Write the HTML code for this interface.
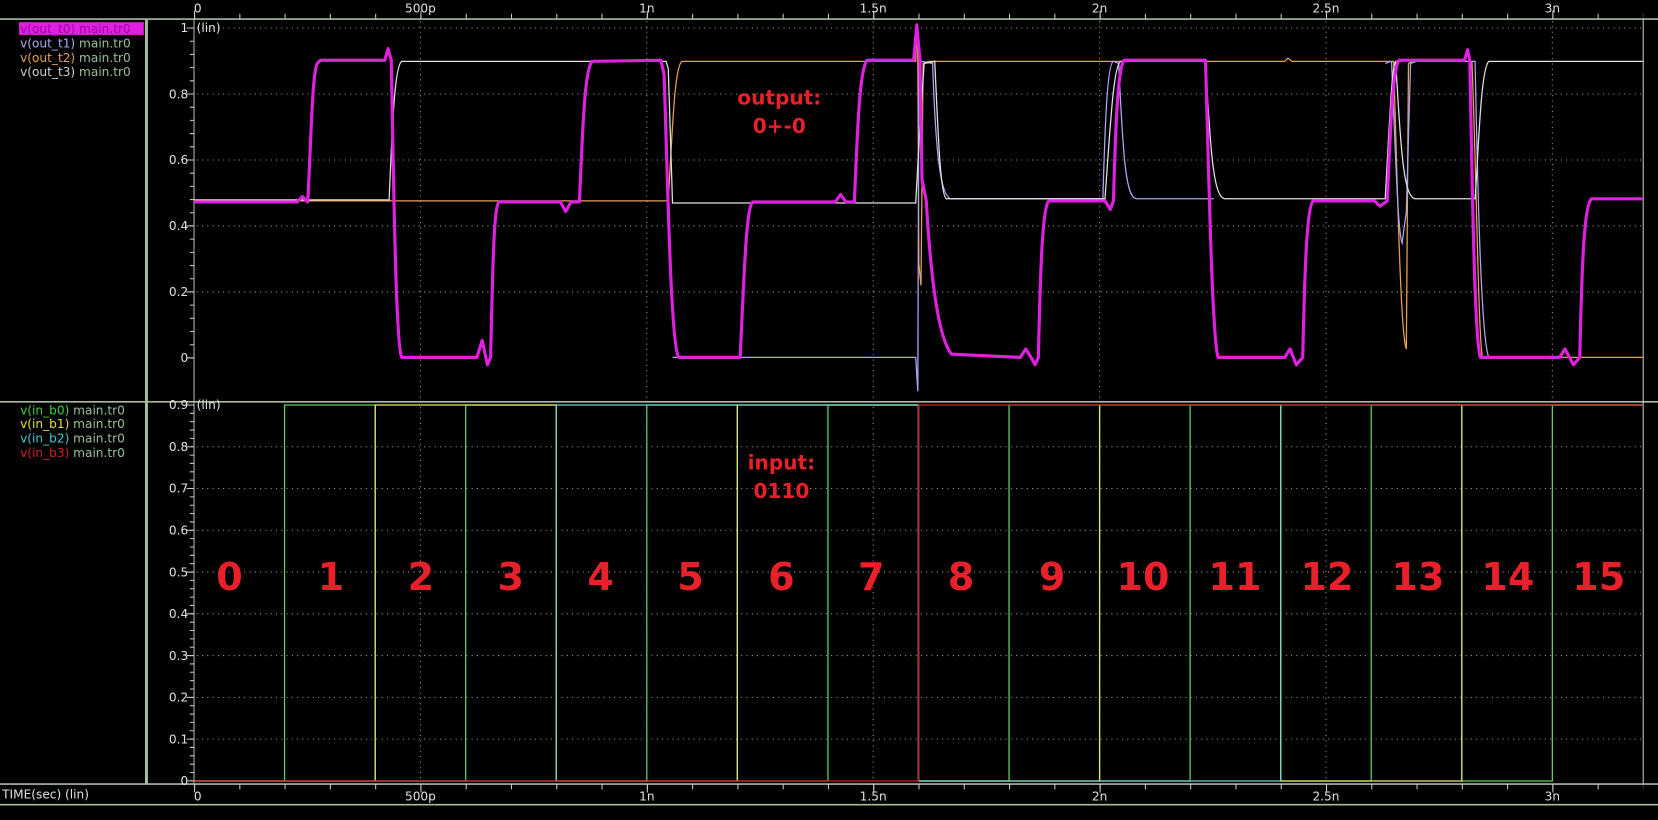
<!DOCTYPE html>
<html><head><meta charset="utf-8"><style>
html,body{margin:0;padding:0;background:#000;overflow:hidden}
svg{display:block}
text{font-family:"DejaVu Sans","Liberation Sans",sans-serif}
.b{font-family:"Liberation Sans",sans-serif;font-weight:bold;fill:#e8202a}
</style></head><body>
<svg width="1658" height="820" viewBox="0 0 1568 775.5" preserveAspectRatio="none" xmlns="http://www.w3.org/2000/svg">
<rect width="1568" height="775.5" fill="#000"/>
<!-- frame -->
<g stroke="#a8bca0" fill="none">
<line x1="0" y1="18" x2="1568" y2="18" stroke-width="1.5"/>
<line x1="0" y1="380" x2="1568" y2="380" stroke-width="1.5"/>
<line x1="0" y1="741.5" x2="1568" y2="741.5" stroke-width="1.5"/>
<line x1="0" y1="761" x2="1568" y2="761" stroke-width="1.5"/>
<line x1="138.5" y1="18" x2="138.5" y2="741" stroke-width="2.8"/>
<line x1="183.5" y1="18" x2="183.5" y2="741" stroke-width="1"/>
<line x1="1554" y1="18" x2="1554" y2="741" stroke-width="1" stroke="#c8c8c8"/>
</g>
<!-- ticks -->
<g stroke="#c8c8c8">
<line x1="183.5" y1="15.5" x2="1554" y2="15.5" stroke-width="5" stroke-dasharray="1 41.82"/>
<line x1="183.5" y1="14" x2="1554" y2="14" stroke-width="8" stroke-dasharray="1 213.1"/>
<line x1="183.5" y1="744" x2="1554" y2="744" stroke-width="5" stroke-dasharray="1 41.82"/>
<line x1="183.5" y1="745.5" x2="1554" y2="745.5" stroke-width="8" stroke-dasharray="1 213.1"/>
<line x1="181.5" y1="26" x2="181.5" y2="340" stroke-width="4" stroke-dasharray="1 11.48"/>
<line x1="180" y1="26" x2="180" y2="340" stroke-width="7" stroke-dasharray="1 61.4"/>
<line x1="181.5" y1="382.5" x2="181.5" y2="740" stroke-width="4" stroke-dasharray="1 6.9"/>
<line x1="180" y1="382.5" x2="180" y2="740" stroke-width="7" stroke-dasharray="1 38.5"/>
</g>
<!-- grid -->
<g stroke="#9a9a9a" stroke-width="1" stroke-dasharray="1 4">
<line x1="186" y1="26.5" x2="1552" y2="26.5"/><line x1="186" y1="88.9" x2="1552" y2="88.9"/>
<line x1="186" y1="151.3" x2="1552" y2="151.3"/><line x1="186" y1="213.7" x2="1552" y2="213.7"/>
<line x1="186" y1="276.1" x2="1552" y2="276.1"/>
<line x1="186" y1="422.5" x2="1552" y2="422.5"/><line x1="186" y1="462" x2="1552" y2="462"/>
<line x1="186" y1="501.5" x2="1552" y2="501.5"/><line x1="186" y1="541" x2="1552" y2="541"/>
<line x1="186" y1="580.5" x2="1552" y2="580.5"/><line x1="186" y1="620" x2="1552" y2="620"/>
<line x1="186" y1="659.5" x2="1552" y2="659.5"/><line x1="186" y1="699" x2="1552" y2="699"/>
<line x1="397.6" y1="20" x2="397.6" y2="740"/><line x1="611.7" y1="20" x2="611.7" y2="740"/>
<line x1="825.8" y1="20" x2="825.8" y2="740"/><line x1="1039.9" y1="20" x2="1039.9" y2="740"/>
<line x1="1254" y1="20" x2="1254" y2="740"/><line x1="1468.1" y1="20" x2="1468.1" y2="740"/>
</g>
<!-- axis labels -->
<g fill="#e0e0e0" font-size="11.5" text-anchor="middle">
<text x="187" y="12">0</text><text x="397.6" y="12">500p</text><text x="611.7" y="12">1n</text>
<text x="825.8" y="12">1.5n</text><text x="1039.9" y="12">2n</text><text x="1254" y="12">2.5n</text><text x="1468.1" y="12">3n</text>
<text x="187" y="757">0</text><text x="397.6" y="757">500p</text><text x="611.7" y="757">1n</text>
<text x="825.8" y="757">1.5n</text><text x="1039.9" y="757">2n</text><text x="1254" y="757">2.5n</text><text x="1468.1" y="757">3n</text>
</g>
<g fill="#e0e0e0" font-size="11.5" text-anchor="end">
<text x="178" y="30.5">1</text><text x="178" y="93">0.8</text><text x="178" y="155.3">0.6</text>
<text x="178" y="217.7">0.4</text><text x="178" y="280.1">0.2</text><text x="178" y="342.5">0</text>
<text x="178" y="387">0.9</text><text x="178" y="426.5">0.8</text><text x="178" y="466">0.7</text>
<text x="178" y="505.5">0.6</text><text x="178" y="545">0.5</text><text x="178" y="584.5">0.4</text>
<text x="178" y="624">0.3</text><text x="178" y="663.5">0.2</text><text x="178" y="703">0.1</text>
<text x="178" y="742.5">0</text>
</g>
<g fill="#e0e0e0" font-size="11.5"><text x="186" y="30.5">(lin)</text><text x="186" y="387">(lin)</text>
<text x="2" y="755">TIME(sec) (lin)</text></g>
<!-- legends -->
<rect x="18" y="21" width="118" height="12" fill="#e020e0"/>
<g font-size="11.5">
<text x="19" y="31" fill="#a000a8">v(out_t0) main.tr0</text>
<text x="19" y="45"><tspan fill="#a8a8f0">v(out_t1)</tspan><tspan fill="#98c098"> main.tr0</tspan></text>
<text x="19" y="58.5"><tspan fill="#e8a050">v(out_t2)</tspan><tspan fill="#98c098"> main.tr0</tspan></text>
<text x="19" y="72"><tspan fill="#d0d0d0">v(out_t3)</tspan><tspan fill="#98c098"> main.tr0</tspan></text>
<text x="19" y="392"><tspan fill="#40d040">v(in_b0)</tspan><tspan fill="#98c098"> main.tr0</tspan></text>
<text x="19" y="405"><tspan fill="#e0e040">v(in_b1)</tspan><tspan fill="#98c098"> main.tr0</tspan></text>
<text x="19" y="418.5"><tspan fill="#40c8d0">v(in_b2)</tspan><tspan fill="#98c098"> main.tr0</tspan></text>
<text x="19" y="432"><tspan fill="#d02020">v(in_b3)</tspan><tspan fill="#98c098"> main.tr0</tspan></text>
</g>
<!-- inputs -->
<g fill="none" stroke-width="1.2">
<path stroke="#60d060" d="M183.5,738.6 H269.1 V383 H354.8 V738.6 H440.4 V383 H526.1 V738.6 H611.7 V383 H697.3 V738.6 H783 V383 H868.6 V738.6 H954.3 V383 H1039.9 V738.6 H1125.5 V383 H1211.2 V738.6 H1296.8 V383 H1382.5 V738.6 H1468.1 V383 H1554"/>
<path stroke="#e8e870" d="M183.5,738.6 H354.8 V383 H526.1 V738.6 H697.3 V383 H868.6 V738.6 H1039.9 V383 H1211.2 V738.6 H1382.5 V383 H1554"/>
<path stroke="#70d0d0" d="M183.5,738.6 H526.1 V383 H868.6 V738.6 H1211.2 V383 H1554"/>
<path stroke="#d02020" d="M183.5,738.6 H868.6 V383 H1554"/>
</g>
<!-- outputs -->
<g fill="none" stroke-width="1.2">
<path stroke="#e8a050" d="M183.5,190 H632 C636,120 638,62 645,58 H866 L867,22 L868,58 L869,250 L871,270 L873,60 L878,58 H1215 L1218,55 L1222,58 H1310 L1318,58 C1322,200 1325,320 1330,330 L1332,60 L1336,58 H1392 C1396,150 1398,320 1402,338 H1554"/>
<path stroke="#a8a8f0" d="M636,338 H866 L868,370 L869,60 L872,58 L882,60 C885,150 890,188 900,188 H1043 C1045,120 1047,60 1053,58 L1058,60 C1062,150 1065,188 1075,188 H1148 M1310,60 L1316,58 C1320,150 1322,220 1326,230 L1330,200 L1334,60 L1340,58 H1395 C1397,150 1400,320 1408,338"/>
<path stroke="#e0e0e0" d="M183.5,189 H368 C371,120 373,62 380,58 H630 L632,65 L636,192 H866 L870,120 L874,60 L884,58 C887,120 889,185 895,188 H1045 C1050,120 1053,60 1060,58 H1140 C1145,150 1148,185 1158,188 H1310 C1314,120 1316,62 1320,58 C1325,150 1328,185 1338,188 H1395 C1398,150 1400,65 1408,58 H1554"/>
<path stroke="#e020e0" stroke-width="3" stroke-linejoin="round" d="M183.5,191 L281,191 L286,186 L291,191 C294,140 295,70 300,60 L303,57 L364,57 L367,46 L370,57 C372,150 374,330 380,338 L451,338 L456,322 L461,345 L464,338 C466,250 467,195 472,191 L530,191 L535,200 L540,191 L548,191 C551,120 553,65 560,58 L625,57 L628,70 C631,150 634,330 642,338 L700,338 C704,250 706,195 712,191 L790,191 L795,184 L800,191 L808,191 C811,120 813,65 820,57 L864,57 L867,24 L870,57 L872,170 L876,190 C880,260 887,320 900,335 L965,338 L970,330 L975,338 L979,345 L982,338 C984,250 986,195 992,190 L1045,190 L1050,198 L1053,190 C1055,120 1057,65 1063,57 L1140,57 C1143,150 1146,320 1152,338 L1215,338 L1220,330 L1226,345 L1232,338 C1234,250 1236,195 1242,190 L1300,190 L1305,195 L1312,190 C1315,120 1317,65 1323,57 L1385,57 L1388,47 L1390,57 C1392,150 1394,320 1400,338 L1475,338 L1480,330 L1488,345 L1494,338 C1496,250 1498,195 1505,188 L1554,188"/>
</g>
<!-- annotations -->
<g class="b" text-anchor="middle">
<text x="737" y="99" font-size="19">output:</text>
<text x="737" y="126" font-size="19">0+-0</text>
<text x="739" y="444" font-size="19">input:</text>
<text x="739" y="471" font-size="19">0110</text>
<g font-size="36">
<text x="217" y="558">0</text><text x="313" y="558">1</text><text x="398" y="558">2</text><text x="483" y="558">3</text>
<text x="568" y="558">4</text><text x="653" y="558">5</text><text x="739" y="558">6</text><text x="824" y="558">7</text>
<text x="909" y="558">8</text><text x="995" y="558">9</text><text x="1081" y="558">10</text><text x="1168" y="558">11</text>
<text x="1255" y="558">12</text><text x="1341" y="558">13</text><text x="1426" y="558">14</text><text x="1512" y="558">15</text>
</g></g>
</svg>
</body></html>
